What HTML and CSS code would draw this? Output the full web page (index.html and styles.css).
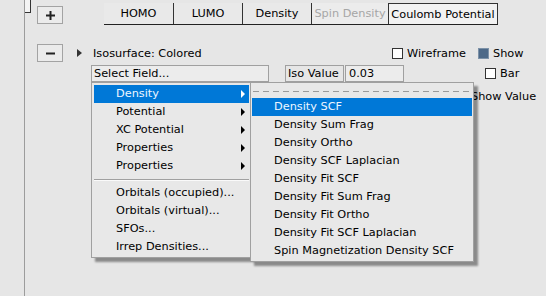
FILE: index.html
```html
<!DOCTYPE html>
<html lang="en">
<head>
  <meta charset="UTF-8">
  <title>Isosurface Panel</title>
  <link rel="stylesheet" href="styles.css">
</head>
<body>
  <div class="panel">
    <div class="corner"></div>

    <div class="row row-top">
      <button class="tool-btn">
        <svg width="9" height="9" viewBox="0 0 9 9"><rect x="0" y="3.5" width="9" height="2" fill="#222"/><rect x="3.5" y="0" width="2" height="9" fill="#222"/></svg>
      </button>
      <div class="tabs">
        <div class="tab tab-homo">HOMO</div>
        <div class="tab tab-lumo">LUMO</div>
        <div class="tab tab-density">Density</div>
        <div class="tab tab-spin">Spin Density</div>
        <div class="tab tab-coulomb">Coulomb Potential</div>
      </div>
    </div>

    <div class="row row-iso">
      <button class="tool-btn">
        <svg width="9" height="9" viewBox="0 0 9 9"><rect x="0" y="3.5" width="9" height="2" fill="#222"/></svg>
      </button>
      <span class="expander"></span>
      <span class="iso-title">Isosurface: Colored</span>
      <label class="check check-wire"><span class="box"></span>Wireframe</label>
      <label class="check"><span class="box checked"></span>Show</label>
    </div>

    <div class="row row-field">
      <div class="field-select">Select Field...</div>
      <div class="iso-value">
        <span class="iso-label">Iso Value</span>
        <span class="iso-input">0.03</span>
      </div>
      <label class="check check-bar"><span class="box"></span>Bar</label>
    </div>

    <div class="row row-show">
      <label class="check check-value"><span class="box"></span>Show Value</label>
    </div>

    <!-- field menu, open -->
    <div class="menu main-menu">
      <div class="menu-item active">Density<span class="arrow"></span></div>
      <div class="menu-item">Potential<span class="arrow"></span></div>
      <div class="menu-item">XC Potential<span class="arrow"></span></div>
      <div class="menu-item">Properties<span class="arrow"></span></div>
      <div class="menu-item">Properties<span class="arrow"></span></div>
      <div class="menu-sep"></div>
      <div class="menu-item">Orbitals (occupied)...</div>
      <div class="menu-item">Orbitals (virtual)...</div>
      <div class="menu-item">SFOs...</div>
      <div class="menu-item">Irrep Densities...</div>
    </div>

    <div class="menu sub-menu">
      <div class="tearoff"></div>
      <div class="menu-item active">Density SCF</div>
      <div class="menu-item">Density Sum Frag</div>
      <div class="menu-item">Density Ortho</div>
      <div class="menu-item">Density SCF Laplacian</div>
      <div class="menu-item">Density Fit SCF</div>
      <div class="menu-item">Density Fit Sum Frag</div>
      <div class="menu-item">Density Fit Ortho</div>
      <div class="menu-item">Density Fit SCF Laplacian</div>
      <div class="menu-item">Spin Magnetization Density SCF</div>
    </div>
  </div>
</body>
</html>
```

FILE: styles.css
```css
* {
  box-sizing: border-box;
}

body {
  margin: 0;
  background: #e6e6e6;
  font-family: 'DejaVu Sans', sans-serif;
  font-size: 11.3px;
  color: #000;
  overflow: hidden;
}

.panel {
  position: relative;
  margin-left: 24px;
  height: 296px;
  border-left: 1px solid #9c9c9c;
}

.corner {
  position: absolute;
  left: 0;
  top: 0;
  width: 6px;
  height: 13px;
  background: #f4f4f4;
  border-right: 1px solid #333;
  border-bottom: 1px solid #333;
}

.row {
  display: flex;
  align-items: center;
}

.row-top {
  padding-top: 3px;
  align-items: flex-start;
}

.tool-btn {
  width: 26px;
  height: 18px;
  margin: 0 0 0 12px;
  padding: 0;
  border: 1px solid #a3a3a3;
  background: #ebebeb;
  display: flex;
  align-items: center;
  justify-content: center;
}

.row-top .tool-btn {
  margin-top: 3px;
}

.tabs {
  display: flex;
  height: 22px;
  margin-left: 41px;
  border-bottom: 1px solid #222;
}

.tab {
  height: 21px;
  display: flex;
  align-items: center;
  justify-content: center;
  background: #e9e9e9;
  white-space: nowrap;
}

.tab-homo { width: 70px; border-right: 1px solid #333; }
.tab-lumo { width: 69px; border-right: 1px solid #333; }
.tab-density { width: 69px; border-right: 1px solid #333; }
.tab-spin { width: 76px; color: #a6a6a6; background: #ececec; }

.tab-coulomb {
  width: 110px;
  border: 1px solid #333;
  border-bottom: none;
  background: #f2f2f2;
}

.row-iso {
  margin-top: 19px;
  height: 18px;
}

.expander {
  width: 0;
  height: 0;
  margin-left: 14px;
  border-top: 4px solid transparent;
  border-bottom: 4px solid transparent;
  border-left: 5px solid #333;
}

.iso-title {
  width: 299px;
  margin-left: 11px;
}

.check {
  display: flex;
  align-items: center;
  gap: 4px;
}

.check-wire {
  width: 86px;
}

.box {
  width: 11px;
  height: 11px;
  border: 1px solid #333;
  background: #fff;
}

.box.checked {
  background: #4d6988;
  border-color: #7d92a8;
}

.row-field {
  margin-top: 3px;
  height: 17px;
}

.field-select {
  width: 178px;
  height: 17px;
  margin-left: 66px;
  padding-left: 2px;
  border: 1px solid #a0a0a0;
  background: #ececec;
  line-height: 15px;
}

.iso-value {
  display: flex;
  margin-left: 16px;
}

.iso-label,
.iso-input {
  width: 59px;
  height: 17px;
  padding-left: 2px;
  border: 1px solid #a0a0a0;
  line-height: 15px;
  white-space: nowrap;
}

.iso-input {
  margin-left: 1px;
  padding-left: 3px;
  background: #ececec;
}

.check-bar {
  margin-left: 81px;
}

.row-show {
  margin-top: 5px;
  height: 18px;
}

.check-value {
  margin-left: 431px;
}

.menu {
  position: absolute;
  background: #e8e8e8;
  border: 1px solid #a0a0a0;
  box-shadow: 4px 4px 2px rgba(0, 0, 0, 0.4);
}

.main-menu {
  left: 66px;
  top: 82px;
  width: 160px;
  padding: 2px 1px 1px 2px;
}

.sub-menu {
  left: 225px;
  top: 82px;
  width: 224px;
  padding: 0 1px 1px 1px;
}

.menu-item {
  position: relative;
  height: 18px;
  line-height: 18px;
  padding-left: 22px;
  white-space: nowrap;
}

.menu-item.active {
  background: #0078d7;
  color: #eef6ff;
}

.arrow {
  position: absolute;
  right: 4px;
  top: 5px;
  border-top: 4px solid transparent;
  border-bottom: 4px solid transparent;
  border-left: 4px solid #000;
}

.active .arrow {
  border-left-color: #fff;
}

.menu-sep {
  margin: 4px 0 3px;
  border-top: 1px solid #a0a0a0;
  border-bottom: 1px solid #fafafa;
}

.tearoff {
  height: 15px;
  padding-top: 8px;
}

.tearoff::before {
  content: '';
  display: block;
  height: 1px;
  margin: 0 1px;
  background: repeating-linear-gradient(90deg, #9a9a9a 0 6px, transparent 6px 10px);
}
```
